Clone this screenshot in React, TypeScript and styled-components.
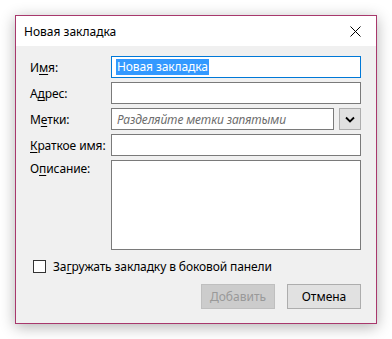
import styled, { createGlobalStyle } from "styled-components";

const GlobalStyle = createGlobalStyle`
  html, body {
    margin: 0;
    padding: 0;
    background: #ffffff;
  }
  body {
    font-family: "Noto Sans", "Open Sans", sans-serif;
    font-size: 12px;
    color: #000;
  }
`;

const Page = styled.div`
  width: 392px;
  height: 339px;
  padding: 15px 0 0 15px;
  box-sizing: border-box;
`;

const Dialog = styled.div`
  width: 362px;
  height: 309px;
  box-sizing: border-box;
  border: 1px solid #a8386c;
  background: #f0f0f0;
  box-shadow: 0 3px 14px rgba(0, 0, 0, 0.3);
  display: flex;
  flex-direction: column;
`;

const TitleBar = styled.div`
  height: 30px;
  background: #ffffff;
  display: flex;
  align-items: center;
  justify-content: space-between;
  padding: 1px 9px 0 8px;
  box-sizing: border-box;
`;

const Title = styled.span`
  font-size: 12px;
`;

const Close = styled.button`
  width: 24px;
  height: 24px;
  border: none;
  background: none;
  padding: 0;
  display: flex;
  align-items: center;
  justify-content: center;
`;

const Body = styled.div`
  flex: 1;
  display: flex;
  flex-direction: column;
  padding: 10px 15px 14px 14px;
`;

const Form = styled.div`
  display: grid;
  grid-template-columns: 81px 1fr;
  grid-template-rows: repeat(4, 22px) 90px;
  row-gap: 4px;
`;

const Label = styled.label<{ $top?: boolean }>`
  display: flex;
  align-items: ${(p) => (p.$top ? "flex-start" : "center")};
  font-size: 12px;
  letter-spacing: -0.1px;
  u {
    text-decoration-thickness: 1px;
    text-underline-offset: 2px;
  }
`;

const Field = styled.div<{ $focused?: boolean; $tall?: boolean }>`
  box-sizing: border-box;
  height: ${(p) => (p.$tall ? "90px" : "22px")};
  border: 1px solid ${(p) => (p.$focused ? "#0078d7" : "#7a7a7a")};
  background: #ffffff;
  display: flex;
  align-items: center;
  padding-left: 4px;
  font-size: 12px;
  letter-spacing: -0.1px;
`;

const Selected = styled.span`
  background: #3399ff;
  color: #ffffff;
  line-height: 16px;
  padding: 0 1px;
`;

const Placeholder = styled.span`
  font-style: italic;
  color: #6d6d6d;
  padding-left: 1px;
`;

const TagsRow = styled.div`
  display: flex;
  gap: 5px;
  ${Field} {
    flex: 1;
  }
`;

const DropButton = styled.button`
  width: 22px;
  height: 22px;
  box-sizing: border-box;
  border: 1px solid #adadad;
  background: #e1e1e1;
  padding: 0;
  display: flex;
  align-items: center;
  justify-content: center;
`;

const CheckRow = styled.div`
  display: flex;
  align-items: center;
  gap: 7px;
  margin: 8px 0 0 3px;
  font-size: 12px;
  letter-spacing: -0.1px;
  u {
    text-decoration-thickness: 1px;
    text-underline-offset: 2px;
  }
`;

const CheckBox = styled.span`
  width: 13px;
  height: 13px;
  box-sizing: border-box;
  border: 1px solid #333333;
  background: #ffffff;
`;

const Buttons = styled.div`
  margin-top: auto;
  display: flex;
  justify-content: flex-end;
  gap: 12px;
`;

const Button = styled.button<{ $disabled?: boolean }>`
  width: 74px;
  height: 25px;
  box-sizing: border-box;
  font-family: inherit;
  font-size: 12px;
  border: 1px solid ${(p) => (p.$disabled ? "#bfbfbf" : "#adadad")};
  background: ${(p) => (p.$disabled ? "#cccccc" : "#e1e1e1")};
  color: ${(p) => (p.$disabled ? "#999999" : "#000000")};
  padding: 0;
`;

export default function App() {
  return (
    <>
      <GlobalStyle />
      <Page>
        <Dialog>
          <TitleBar>
            <Title>Новая закладка</Title>
            <Close aria-label="Закрыть">
              <svg width="11" height="11" viewBox="0 0 11 11">
                <path d="M0.5 0.5 L10.5 10.5 M10.5 0.5 L0.5 10.5" stroke="#000" strokeWidth="1" />
              </svg>
            </Close>
          </TitleBar>
          <Body>
            <Form>
              <Label>
                <span>И<u>м</u>я:</span>
              </Label>
              <Field $focused>
                <Selected>Новая закладка</Selected>
              </Field>

              <Label>
                <span>А<u>д</u>рес:</span>
              </Label>
              <Field />

              <Label>
                <span>М<u>е</u>тки:</span>
              </Label>
              <TagsRow>
                <Field>
                  <Placeholder>Разделяйте метки запятыми</Placeholder>
                </Field>
                <DropButton aria-label="Метки">
                  <svg width="10" height="7" viewBox="0 0 10 7">
                    <path d="M1 1.5 L5 5.5 L9 1.5" fill="none" stroke="#000" strokeWidth="1.8" />
                  </svg>
                </DropButton>
              </TagsRow>

              <Label>
                <span><u>К</u>раткое имя:</span>
              </Label>
              <Field />

              <Label $top>
                <span>О<u>п</u>исание:</span>
              </Label>
              <Field $tall />
            </Form>

            <CheckRow>
              <CheckBox />
              <span>За<u>г</u>ружать закладку в боковой панели</span>
            </CheckRow>

            <Buttons>
              <Button $disabled>Добавить</Button>
              <Button>Отмена</Button>
            </Buttons>
          </Body>
        </Dialog>
      </Page>
    </>
  );
}
